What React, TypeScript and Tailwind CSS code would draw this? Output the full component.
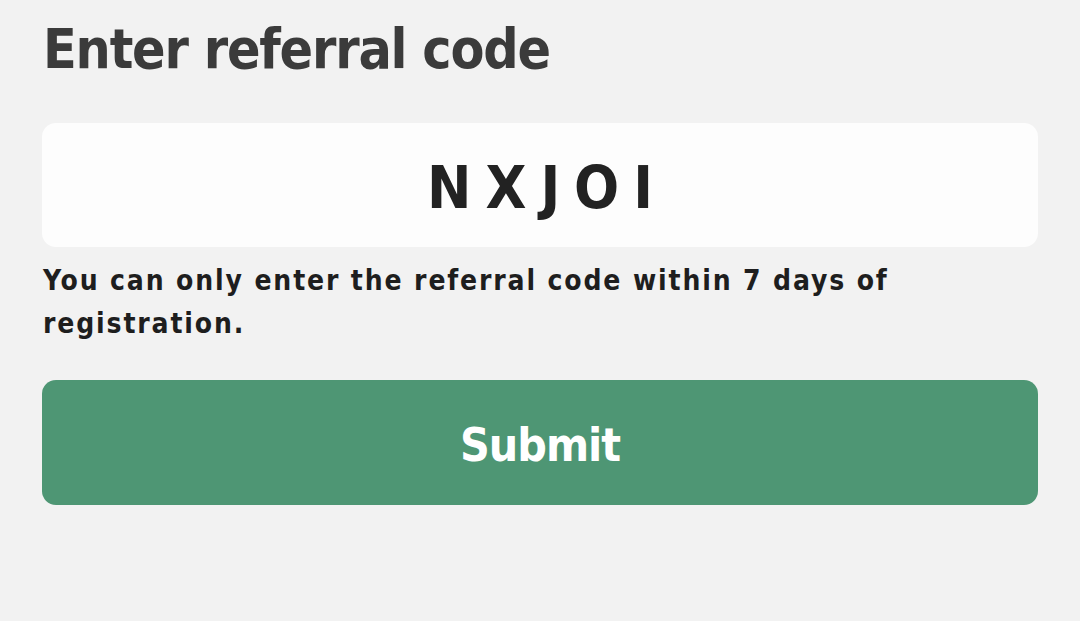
export default function App() {
    return (
        <div className="w-[1080px] h-[621px] bg-[#f2f2f2] px-[42px] pt-[16px] overflow-hidden font-['DejaVu_Sans_Condensed','DejaVu_Sans',sans-serif]">
            <h1 className="text-[55px] leading-[66px] font-bold text-[#3b3b3b] tracking-[-1.2px] pl-[1px]">
                Enter referral code
            </h1>
            <div className="mt-[41px] h-[124px] rounded-[14px] bg-[#fdfdfd] flex items-center justify-center">
                <span className="mt-[7px] text-[59px] font-bold text-[#222222] tracking-[14px] pl-[14px]">
                    NXJOI
                </span>
            </div>
            <p className="mt-[12px] max-w-[900px] text-[28px] leading-[43px] font-bold text-[#1e1e1e] tracking-[1.85px] pl-[1px]">
                You can only enter the referral code within 7 days of registration.
            </p>
            <button className="mt-[35px] w-full h-[125px] rounded-[14px] bg-[#4e9674] text-white text-[46px] font-bold tracking-[-1px] flex items-center justify-center">
                <span className="mt-[6px]">Submit</span>
            </button>
        </div>
    );
}
